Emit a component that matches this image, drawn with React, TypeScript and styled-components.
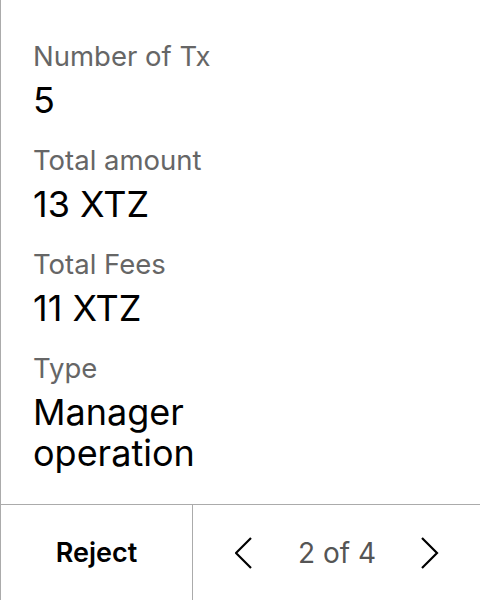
import React, { FC } from 'react';
import styled, { createGlobalStyle } from 'styled-components';

const GlobalStyle = createGlobalStyle`
	html, body {
		margin: 0;
		padding: 0;
		background: #fff;
	}
	body {
		font-family: Inter, 'Noto Sans', sans-serif;
	}
`;

const Screen = styled.div`
	display: flex;
	flex-direction: column;
	height: 600px;
	width: 480px;
	box-sizing: border-box;
	border-left: 1px solid #ababab;
`;

const Details = styled.div`
	display: flex;
	flex: 1;
	flex-direction: column;
	gap: 24px;
	padding: 41px 32px 0;
`;

const Item = styled.div`
	display: flex;
	flex-direction: column;
	gap: 8px;
`;

const Label = styled.div`
	color: #666;
	font-size: 27.5px;
	line-height: 31px;
`;

const Value = styled.div`
	color: #000;
	font-size: 36px;
	line-height: 41px;
	width: 200px;
`;

const Footer = styled.div`
	border-top: 1px solid #ababab;
	display: flex;
	height: 95px;
`;

const RejectButton = styled.button`
	background: none;
	border: none;
	border-right: 1px solid #ababab;
	color: #000;
	cursor: pointer;
	font-family: inherit;
	font-size: 27px;
	font-weight: 600;
	padding: 0;
	width: 192px;
`;

const Pager = styled.div`
	align-items: center;
	display: flex;
	flex: 1;
	justify-content: space-between;
	padding: 0 41px 0 42px;
`;

const PageText = styled.span`
	color: #555;
	font-size: 28px;
`;

const Chevron = styled.svg`
	cursor: pointer;
	height: 32px;
	width: 18px;
`;

type Detail = { label: string; value: string };

const details: Detail[] = [
	{ label: 'Number of Tx', value: '5' },
	{ label: 'Total amount', value: '13 XTZ' },
	{ label: 'Total Fees', value: '11 XTZ' },
	{ label: 'Type', value: 'Manager operation' },
];

const App: FC = () => (
	<>
		<GlobalStyle />
		<Screen>
			<Details>
				{details.map((d) => (
					<Item key={d.label}>
						<Label>{d.label}</Label>
						<Value>{d.value}</Value>
					</Item>
				))}
			</Details>
			<Footer>
				<RejectButton>Reject</RejectButton>
				<Pager>
					<Chevron viewBox="0 0 18 32">
						<path d="M16 1 L1 16 L16 31" fill="none" stroke="#000" strokeWidth="2.2" />
					</Chevron>
					<PageText>2 of 4</PageText>
					<Chevron viewBox="0 0 18 32">
						<path d="M1 1 L16 16 L1 31" fill="none" stroke="#000" strokeWidth="2.2" />
					</Chevron>
				</Pager>
			</Footer>
		</Screen>
	</>
);

export default App;
